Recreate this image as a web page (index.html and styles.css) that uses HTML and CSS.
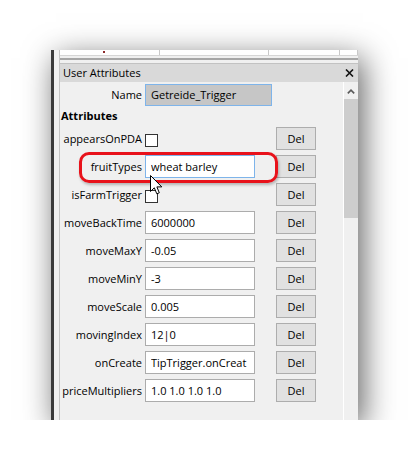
FILE: index.html
```html
<!DOCTYPE html>
<html lang="en">

<head>
    <meta charset="UTF-8">
    <title>User Attributes</title>
    <meta name="viewport" content="width=device-width, initial-scale=1.0">
    <link rel="stylesheet" href="styles.css">
</head>

<body>
    <div class="window">
        <div class="panel">
            <!-- table above the dock, scrolled almost out of view -->
            <div class="grid-strip">
                <span class="cell c1"><i class="tick"></i></span>
                <span class="cell c2"></span>
                <span class="cell c3"></span>
                <span class="cell c4"></span>
            </div>
            <div class="strip-rule"></div>

            <div class="dock-title">
                <span>User Attributes</span>
                <svg class="close" width="9" height="8" viewBox="0 0 9 8">
                    <path d="M1 0.5 L8 7.5 M8 0.5 L1 7.5" stroke="#111" stroke-width="1.6" fill="none" />
                </svg>
            </div>

            <div class="dock-body">
                <div class="attr-list">
                    <div class="name-row">
                        <label>Name</label>
                        <span class="field name-field"><span class="value">Getreide_Trigger</span></span>
                    </div>
                    <div class="section">Attributes</div>

                    <div class="attr-row">
                        <label>appearsOnPDA</label>
                        <span class="check"></span>
                        <button class="del">Del</button>
                    </div>
                    <div class="attr-row">
                        <label>fruitTypes</label>
                        <span class="field hot"><span class="value">wheat barley</span></span>
                        <button class="del">Del</button>
                    </div>
                    <div class="attr-row">
                        <label>isFarmTrigger</label>
                        <span class="check"></span>
                        <button class="del">Del</button>
                    </div>
                    <div class="attr-row">
                        <label>moveBackTime</label>
                        <span class="field"><span class="value">6000000</span></span>
                        <button class="del">Del</button>
                    </div>
                    <div class="attr-row">
                        <label>moveMaxY</label>
                        <span class="field"><span class="value">-0.05</span></span>
                        <button class="del">Del</button>
                    </div>
                    <div class="attr-row">
                        <label>moveMinY</label>
                        <span class="field"><span class="value">-3</span></span>
                        <button class="del">Del</button>
                    </div>
                    <div class="attr-row">
                        <label>moveScale</label>
                        <span class="field"><span class="value">0.005</span></span>
                        <button class="del">Del</button>
                    </div>
                    <div class="attr-row">
                        <label>movingIndex</label>
                        <span class="field"><span class="value">12|0</span></span>
                        <button class="del">Del</button>
                    </div>
                    <div class="attr-row">
                        <label>onCreate</label>
                        <span class="field"><span class="value">TipTrigger.onCreat</span></span>
                        <button class="del">Del</button>
                    </div>
                    <div class="attr-row">
                        <label>priceMultipliers</label>
                        <span class="field"><span class="value">1.0 1.0 1.0 1.0</span></span>
                        <button class="del">Del</button>
                    </div>
                </div>

                <div class="scrollbar">
                    <div class="scroll-up">
                        <svg width="8" height="5" viewBox="0 0 8 5">
                            <path d="M0.8 4.4 L4 1.2 L7.2 4.4" stroke="#5a5a5a" stroke-width="1.6" fill="none" />
                        </svg>
                    </div>
                    <div class="thumb"></div>
                </div>
            </div>
        </div>

        <!-- red marker round the fruitTypes row -->
        <div class="callout"></div>

        <!-- mouse pointer -->
        <svg class="pointer" width="13" height="21" viewBox="0 0 13 21">
            <path d="M0.5 0.5 L0.5 16.5 L4.3 12.8 L6.8 18.8 L9.3 17.8 L6.9 11.9 L11.8 11.9 Z" fill="#fff" stroke="#000" stroke-width="1" stroke-linejoin="miter" />
        </svg>
    </div>
</body>

</html>
```

FILE: styles.css
```css
body {
    margin: 0;
    padding: 50px 0 0 51px;
    background-color: #fff;
    font-family: "Open Sans", "Liberation Sans", sans-serif;
    font-size: 11px;
    color: #000;
    overflow: hidden;
}

.window {
    position: relative;
    display: flex;
    width: 307px;
    height: 370px;
    padding-left: 5px;
    border-left: 3px solid #3a3a3a;
    background-color: #f0f0f0;
    box-shadow: 5px 8px 30px rgba(0, 0, 0, 0.62);
    box-sizing: border-box;
}

.panel {
    flex: 1;
    display: flex;
    flex-direction: column;
    border-left: 1px solid #c4c4c4;
}

/* table strip at the very top */
.grid-strip {
    display: flex;
    height: 5px;
    background-color: #fff;
    border-bottom: 1px solid #d6d6d6;
}

.cell {
    border-right: 1px solid #c9c9c9;
}

.c1 { width: 99px; }
.c2 { width: 108px; }
.c3 { width: 70px; }
.c4 { flex: 1; }

.tick {
    display: block;
    width: 2px;
    height: 2px;
    margin: 1px 0 0 43px;
    background-color: #8c2a2a;
}

.strip-rule {
    height: 2px;
    margin: 2px 0 3px;
    background-color: #a6a6a6;
}

/* dock header */
.dock-title {
    display: flex;
    align-items: center;
    justify-content: space-between;
    height: 18px;
    padding: 0 4px 0 3px;
    border-top: 1px solid #c2c2c2;
    background-color: #d9d9d9;
    line-height: 18px;
}

.close {
    display: block;
}

.dock-body {
    flex: 1;
    display: flex;
}

.attr-list {
    width: 283px;
    padding-top: 1px;
    border-right: 1px solid #fff;
}

.name-row {
    display: grid;
    grid-template-columns: 82px 127px;
    column-gap: 3px;
    align-items: center;
    height: 22px;
}

.attr-row {
    display: grid;
    grid-template-columns: 82px 3px 110px 21px 40px;
    align-items: center;
    height: 23px;
    margin-bottom: 5px;
}

.attr-row label {
    grid-column: 1;
}

.attr-row .field,
.attr-row .check {
    grid-column: 3;
}

.attr-row .del {
    grid-column: 5;
}

label {
    text-align: right;
    white-space: nowrap;
    line-height: 23px;
}

.section {
    height: 22px;
    line-height: 22px;
    padding-left: 1px;
    font-weight: bold;
}

.field {
    display: block;
    height: 23px;
    padding: 0 4px 0 5px;
    border: 1px solid #acacac;
    background-color: #fff;
    box-sizing: border-box;
    line-height: 21px;
}

.field .value {
    display: block;
    overflow: hidden;
    white-space: nowrap;
}

.name-field {
    height: 22px;
    line-height: 20px;
    background-color: #c6c6c6;
    border-color: #7eb4ea;
}

.hot {
    border-color: #7eb4ea;
}

.check {
    width: 13px;
    height: 13px;
    margin-top: 3px;
    border: 1px solid #333;
    background-color: #fff;
    box-sizing: border-box;
}

.del {
    height: 23px;
    padding: 0;
    border: 1px solid #adadad;
    background-color: #e1e1e1;
    font-family: inherit;
    font-size: 11px;
    color: #000;
}

/* vertical scrollbar */
.scrollbar {
    width: 14px;
    background-color: #f0f0f0;
}

.scroll-up {
    display: flex;
    justify-content: center;
    align-items: center;
    height: 17px;
}

.scroll-up svg {
    display: block;
    margin-top: 2px;
}

.thumb {
    height: 119px;
    background-color: #cdcdcd;
}

.callout {
    position: absolute;
    left: 25px;
    top: 102px;
    width: 199px;
    height: 31px;
    border: 3px solid #e8121b;
    border-radius: 10px;
    box-sizing: border-box;
    box-shadow: 1px 2px 3px rgba(0, 0, 0, 0.25);
}

.pointer {
    position: absolute;
    left: 96px;
    top: 125px;
}
```
